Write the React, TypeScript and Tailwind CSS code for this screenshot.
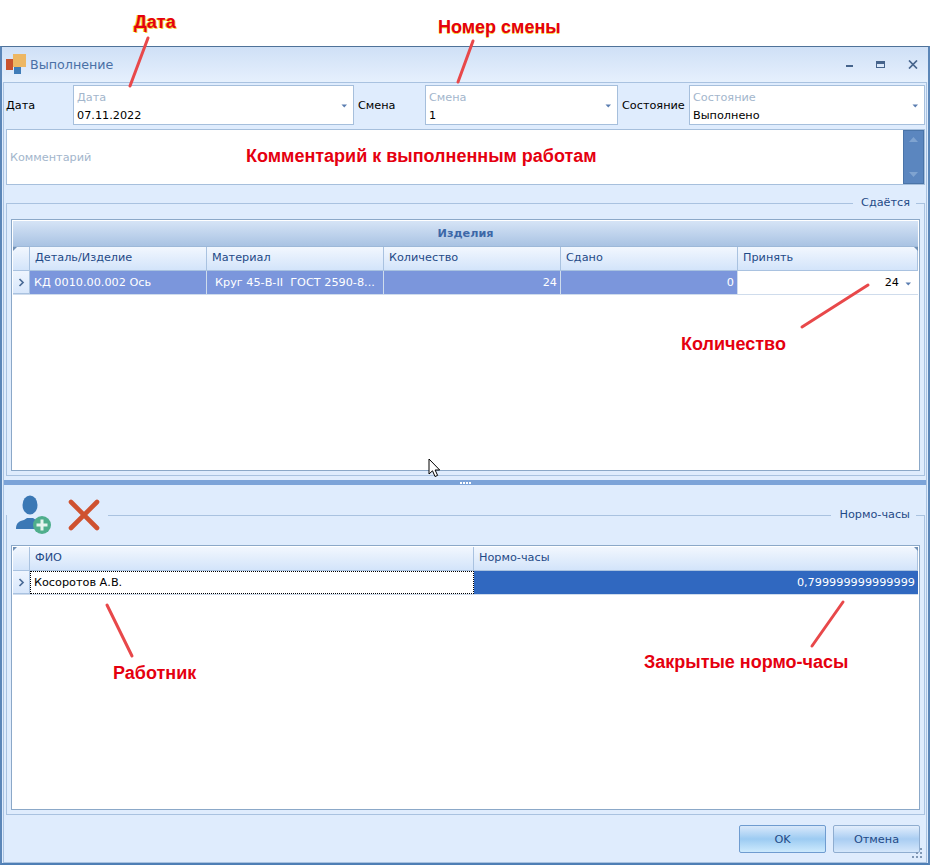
import type { ReactNode } from "react";

const uiFont = "font-['DejaVu_Sans',sans-serif] text-[11.25px]";

function Caret({ className = "" }: { className?: string }) {
  return (
    <svg width="7" height="4" viewBox="0 0 7 4" className={className}>
      <path d="M0.5 0.5h5.5L3.25 3.5z" fill="#5a7db0" />
    </svg>
  );
}

function Field({ width, label, value }: { width: string; label: string; value: string }) {
  return (
    <div className={`relative flex h-10 flex-col justify-center border border-[#a6bfdc] bg-white pl-[3px] pt-[3px] leading-[18px] ${width}`}>
      <span className="text-[#a3b6cc]">{label}</span>
      <span className="text-black">{value}</span>
      <Caret className="absolute right-[5px] top-[18px]" />
    </div>
  );
}

function GroupHeader({ label, children }: { label: string; children?: ReactNode }) {
  return (
    <div className="relative flex h-full items-center">
      <div className="absolute bottom-0 left-0 top-1/2 w-px bg-[#a9c2e0]" />
      <div className="absolute bottom-0 right-0 top-1/2 w-px bg-[#a9c2e0]" />
      {children}
      <div className="h-px flex-1 bg-[#a9c2e0]" />
      <span className="pl-[8px] pr-[6px] text-[#1f4a87]">{label}</span>
      <div className="h-px w-[9px] bg-[#a9c2e0]" />
    </div>
  );
}

function HeaderCell({ width, children }: { width: string; children?: ReactNode }) {
  return (
    <div className={`flex h-full items-center border-r border-[#a9c2e0] pl-[5px] text-[#1f4a87] ${width}`}>
      {children}
    </div>
  );
}

function CornerMarks() {
  return (
    <>
      <svg width="4" height="4" viewBox="0 0 4 4" className="absolute left-0 top-0">
        <path d="M0 0h4L0 4z" fill="#6f8fb5" />
      </svg>
      <svg width="4" height="4" viewBox="0 0 4 4" className="absolute right-0 top-0">
        <path d="M0 0h4v4z" fill="#6f8fb5" />
      </svg>
    </>
  );
}

function RowIndicator() {
  return (
    <div className="flex h-full w-[17px] items-center justify-center border-r border-b border-[#a9c2e0] bg-gradient-to-b from-[#eef5fe] to-[#d8e7fb]">
      <svg width="7" height="9" viewBox="0 0 7 9">
        <path d="M1.5 1l3.5 3.5L1.5 8" fill="none" stroke="#4a6b96" strokeWidth="1.7" />
      </svg>
    </div>
  );
}

function UserAddIcon() {
  return (
    <svg width="40" height="40" viewBox="0 0 40 40">
      <ellipse cx="15" cy="10" rx="7.5" ry="9.5" fill="#3b78b5" />
      <path d="M1 34c0-6 3-8 8-9l3-2h6l3 2c2 .5 3 1 4 2l-2 7z" fill="#3b78b5" />
      <circle cx="27" cy="30" r="9" fill="#4fae8c" />
      <path d="M27 24.5v11M21.5 30h11" stroke="#e6f4ee" strokeWidth="3" />
    </svg>
  );
}

function DeleteIcon() {
  return (
    <svg width="34" height="34" viewBox="0 0 34 34">
      <path d="M4 4l26 26M30 4L4 30" stroke="#cf5230" strokeWidth="4.6" strokeLinecap="round" />
    </svg>
  );
}

function TitleIcon() {
  return (
    <svg width="21" height="21" viewBox="0 0 21 21" className="shrink-0">
      <rect x="0" y="5" width="7" height="11" fill="#c9532e" />
      <rect x="7" y="0" width="13" height="13" fill="#edb763" />
      <rect x="8" y="13" width="7" height="7" fill="#3f7cb8" />
    </svg>
  );
}

function ResizeGrip() {
  return (
    <svg width="11" height="11" viewBox="0 0 11 11" className="absolute bottom-[3px] right-[3px]">
      <path d="M8 0h2v2H8zM4 4h2v2H4zM8 4h2v2H8zM0 8h2v2H0zM4 8h2v2H4zM8 8h2v2H8z" fill="#7f97b5" />
    </svg>
  );
}

function Annotations() {
  const text = "absolute font-['Liberation_Sans',sans-serif] text-[18px] font-bold leading-none text-[#e5000f]";
  return (
    <>
      <svg width="930" height="865" className="pointer-events-none absolute left-0 top-0">
        <g stroke="#e8484a" strokeWidth="3" strokeLinecap="round">
          <path d="M148 38L130 86" />
          <path d="M473 41L458 82" />
          <path d="M868 285L802 327" />
          <path d="M107 605L132 656" />
          <path d="M843 602L812 646" />
        </g>
      </svg>
      <span className={`${text} left-[134px] top-[13px] [text-shadow:-1px_0_0_#f4d23a,1px_1px_0_#f4d23a]`}>Дата</span>
      <span className={`${text} left-[438px] top-[18px] [text-shadow:0_1px_0_#f4d23a]`}>Номер смены</span>
      <span className={`${text} left-[246px] top-[147px]`}>Комментарий к выполненным работам</span>
      <span className={`${text} left-[681px] top-[335px]`}>Количество</span>
      <span className={`${text} left-[113px] top-[664px]`}>Работник</span>
      <span className={`${text} left-[644px] top-[653px]`}>Закрытые нормо-часы</span>
      <svg width="14" height="20" viewBox="0 0 14 20" className="absolute left-[428px] top-[458px]">
        <path d="M1 1v15l3.5-3.2L7 18.5l2.6-1.1-2.5-5.4h4.6z" fill="#fff" stroke="#000" strokeWidth="1" />
      </svg>
    </>
  );
}

export default function App() {
  const label = "w-[67px] pt-[3px]";
  return (
    <div className={`relative h-[865px] w-[930px] overflow-hidden bg-white ${uiFont}`}>
      <div className="h-[46px]" />
      <div className="flex h-[819px] flex-col border-x-2 border-t border-b-2 border-x-[#5b86b8] border-t-[#4f7299] border-b-[#4f7fb5] bg-[#dfecfd]">
        <div className="flex h-[35px] items-center bg-gradient-to-b from-[#cfe0f6] to-[#e6f0fd] pl-[4px] pr-[10px]">
          <TitleIcon />
          <span className="ml-[3px] text-[12.7px] text-[#4a70a6]">Выполнение</span>
          <div className="ml-auto flex items-center gap-[23px]">
            <div className="mt-[2px] h-[2px] w-[7px] bg-[#46648c]" />
            <div className="h-[7px] w-[9px] border border-t-[3px] border-[#46648c]" />
            <svg width="10" height="9" viewBox="0 0 10 9">
              <path d="M1 .5l8 8M9 .5l-8 8" stroke="#46648c" strokeWidth="1.7" />
            </svg>
          </div>
        </div>

        <div className="relative mx-px flex flex-1 flex-col border border-[#a9c2e0] pl-[2px] pr-px">
          <div className="mt-[2px] flex h-10 items-center text-black">
            <span className={label}>Дата</span>
            <Field width="w-[281px]" label="Дата" value="07.11.2022" />
            <span className={`ml-[4px] ${label}`}>Смена</span>
            <Field width="w-[193px]" label="Смена" value="1" />
            <span className={`ml-[4px] ${label}`}>Состояние</span>
            <Field width="w-[236px]" label="Состояние" value="Выполнено" />
          </div>

          <div className="mt-[4px] flex h-14 items-center border border-[#a6bfdc] bg-white pl-[3px] text-[#a3b6cc]">
            <span className="pt-[2px]">Комментарий</span>
            <div className="ml-auto flex h-full w-[21px] flex-col items-center justify-between border border-[#4a74a8] bg-[#5b86bf] py-[6px]">
              <svg width="9" height="5" viewBox="0 0 9 5"><path d="M4.5 0L9 5H0z" fill="#7fa3d0" /></svg>
              <svg width="9" height="5" viewBox="0 0 9 5"><path d="M4.5 5L9 0H0z" fill="#7fa3d0" /></svg>
            </div>
          </div>

          <div className="mt-[11px] h-[14px]">
            <GroupHeader label="Сдаётся" />
          </div>
          <div className="flex h-[266px] flex-col border-x border-b border-[#a9c2e0] px-[4px] pb-[4px] pt-[9px]">
            <div className="flex flex-1 flex-col border border-[#8ba8c8] bg-white p-px">
              <div className="flex h-[26px] items-center justify-center border-b border-[#9db8d8] bg-gradient-to-b from-[#d6e4f6] to-[#a9c3e3] pt-[2px] font-bold text-[#3d68a8]">
                Изделия
              </div>
              <div className="relative flex h-[24px] border-b border-[#a9c2e0] bg-gradient-to-b from-[#f2f7fe] to-[#d3e4fa]">
                <CornerMarks />
                <HeaderCell width="w-[17px]" />
                <HeaderCell width="w-[177px]">Деталь/Изделие</HeaderCell>
                <HeaderCell width="w-[177px]">Материал</HeaderCell>
                <HeaderCell width="w-[177px]">Количество</HeaderCell>
                <HeaderCell width="w-[177px]">Сдано</HeaderCell>
                <HeaderCell width="flex-1">Принять</HeaderCell>
              </div>
              <div className="flex h-[24px] items-center border-b border-[#cfdcec]">
                <RowIndicator />
                <div className="flex h-full w-[177px] items-center border-r border-[#cfdcec] bg-[#7b96dc] pl-[4px] pt-[2px] text-white">КД 0010.00.002 Ось</div>
                <div className="flex h-full w-[177px] items-center whitespace-pre border-r border-[#cfdcec] bg-[#7b96dc] pl-[8px] pt-[2px] text-white">Круг 45-В-II  ГОСТ 2590-8...</div>
                <div className="flex h-full w-[177px] items-center justify-end border-r border-[#cfdcec] bg-[#7b96dc] pr-[3px] pt-[2px] text-white">24</div>
                <div className="flex h-full w-[177px] items-center justify-end border-r border-[#cfdcec] bg-[#7b96dc] pr-[3px] pt-[2px] text-white">0</div>
                <div className="flex h-full flex-1 items-center justify-end gap-[6px] pr-[6px] pt-[2px] text-black">
                  24
                  <Caret />
                </div>
              </div>
            </div>
          </div>

          <div className="mt-[4px] -ml-[2px] -mr-px flex h-[5px] items-center justify-center gap-[1px] bg-[#7ca3d8]">
            <div className="h-[2px] w-[2px] bg-white" />
            <div className="h-[2px] w-[2px] bg-white" />
            <div className="h-[2px] w-[2px] bg-white" />
            <div className="h-[2px] w-[2px] bg-white" />
          </div>

          <div className="mt-[10px] h-[40px]">
            <GroupHeader label="Нормо-часы">
              <div className="flex h-[40px] items-center gap-[12px] pl-[9px] pr-[7px]">
                <UserAddIcon />
                <DeleteIcon />
              </div>
            </GroupHeader>
          </div>
          <div className="flex h-[280px] flex-col border-x border-b border-[#a9c2e0] px-[4px] pb-[4px] pt-[10px]">
            <div className="flex flex-1 flex-col border border-[#8ba8c8] bg-white p-px">
              <div className="relative flex h-[24px] border-b border-[#a9c2e0] bg-gradient-to-b from-[#f2f7fe] to-[#d3e4fa]">
                <CornerMarks />
                <HeaderCell width="w-[17px]" />
                <HeaderCell width="w-[444px]">ФИО</HeaderCell>
                <HeaderCell width="flex-1">Нормо-часы</HeaderCell>
              </div>
              <div className="flex h-[24px] items-center border-b border-[#cfdcec]">
                <RowIndicator />
                <div className="flex h-full w-[444px] items-center border border-dotted border-black pl-[3px] pt-[1px] text-black">Косоротов А.В.</div>
                <div className="flex h-full flex-1 items-center justify-end bg-[#3068c0] pr-[3px] pt-[1px] text-white">0,799999999999999</div>
              </div>
            </div>
          </div>

          <div className="mt-[10px] flex justify-end gap-[7px] pr-[5px]">
            <button className="h-[28px] w-[87px] rounded-[2px] border border-[#6f9cd0] bg-gradient-to-b from-[#d9e8fa] via-[#9ccbf2] to-[#cdeafd] pt-[2px] text-[#1f4a87]">OK</button>
            <button className="h-[28px] w-[87px] rounded-[2px] border border-[#8fadd0] bg-gradient-to-b from-[#e3eefc] via-[#a9cdf2] to-[#d5e7fb] pt-[2px] text-[#1f4a87]">Отмена</button>
          </div>
          <ResizeGrip />
        </div>
      </div>
      <Annotations />
    </div>
  );
}
